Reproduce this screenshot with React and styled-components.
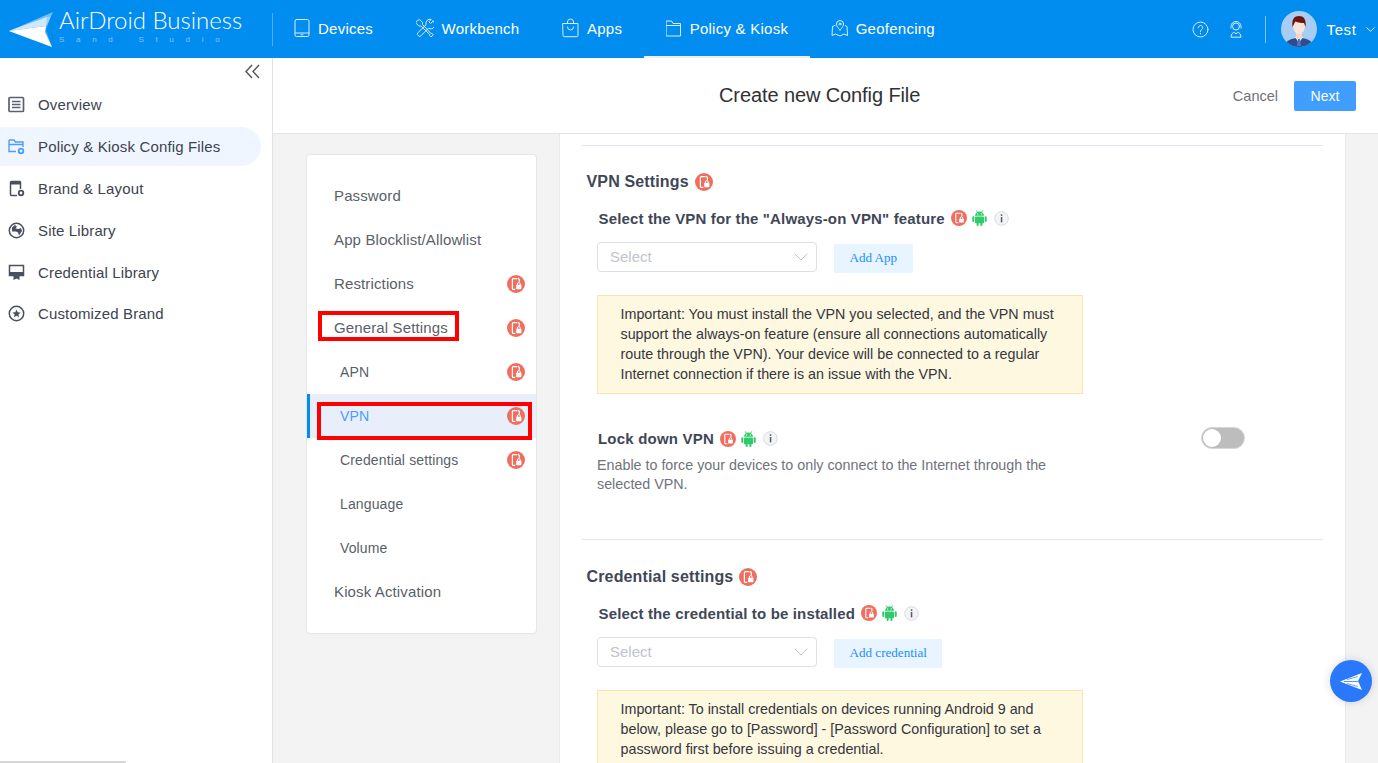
import React from "react";
import styled, { createGlobalStyle } from "styled-components";
import { ChevronDown } from "lucide-react";

const Global = createGlobalStyle`
  html, body { margin: 0; padding: 0; height: 100%; overflow: hidden; }
  body { font-family: "Liberation Sans", Arial, sans-serif; background: #f3f3f3; }
  * { box-sizing: border-box; }
`;

const Page = styled.div`
  position: relative;
  width: 1378px;
  height: 763px;
  overflow: hidden;
  display: flex;
  flex-direction: column;
`;

/* ---------- top bar ---------- */
const TopBar = styled.header`
  height: 58px;
  flex: none;
  background: #018cf0;
  display: flex;
  align-items: center;
  color: #fff;
`;
const Logo = styled.div`
  width: 273px;
  height: 33px;
  flex: none;
  display: flex;
  align-items: center;
  padding-left: 8px;
  gap: 5px;
  border-right: 1px solid rgba(255, 255, 255, 0.3);
`;
const LogoWords = styled.div`
  display: flex;
  flex-direction: column;
  width: 186px;
  align-self: flex-start;
  margin-top: -3.5px;
`;
const LogoName = styled.span`
  font-family: "Lato", sans-serif;
  font-weight: 300;
  font-size: 24px;
  line-height: 22px;
  white-space: nowrap;
`;
const LogoSub = styled.span`
  margin-top: 3.5px;
  font-size: 8px;
  line-height: 9px;
  letter-spacing: 11.7px;
  color: rgba(255, 255, 255, 0.5);
  white-space: nowrap;
`;
const Nav = styled.nav`
  display: flex;
  height: 100%;
`;
const NavItem = styled.div`
  height: 100%;
  padding: 0 21.5px 0 21px;
  display: flex;
  align-items: center;
  gap: 8px;
  font-size: 15px;
  letter-spacing: 0.25px;
  color: #fff;
  border-bottom: 2px solid ${(p) => (p.$active ? "#f0f0f0" : "transparent")};
`;
const TopRight = styled.div`
  margin-left: auto;
  display: flex;
  align-items: center;
  height: 100%;
`;
const TopIcon = styled.span`
  display: flex;
  width: 20px;
  justify-content: center;
  margin-right: 15px;
`;
const TopSep = styled.span`
  width: 1px;
  height: 27px;
  background: rgba(255, 255, 255, 0.5);
  margin: 0 15px 0 4px;
`;
const UserName = styled.span`
  font-size: 15px;
  letter-spacing: 0.6px;
  margin-left: 10px;
`;
const UserChevron = styled(ChevronDown)`
  margin: 0 0.5px 0 6px;
`;

/* ---------- body ---------- */
const Body = styled.div`
  flex: 1;
  min-height: 0;
  display: flex;
`;
const Sidebar = styled.aside`
  width: 273px;
  flex: none;
  background: #fff;
  border-right: 1px solid #e2e2e2;
  padding-top: 26px;
  display: flex;
  flex-direction: column;
`;
const Collapse = styled.div`
  height: 0;
  display: flex;
  justify-content: flex-end;
  padding-right: 12px;
  margin-top: -20px;
  margin-bottom: 20px;
`;
const SideList = styled.div`
  display: flex;
  flex-direction: column;
`;
const SideRow = styled.div`
  width: 261px;
  height: 39px;
  margin: 1.4px 0;
  display: flex;
  align-items: center;
  gap: 13px;
  padding-left: 8px;
  font-size: 15px;
  letter-spacing: 0.15px;
  color: #3d4350;
  background: ${(p) => (p.$active ? "#f0f6ff" : "transparent")};
  border-radius: 0 20px 20px 0;
`;
const Main = styled.main`
  flex: 1;
  min-width: 0;
  display: flex;
  flex-direction: column;
`;
const TitleBar = styled.div`
  position: relative;
  height: 76px;
  flex: none;
  background: #fff;
  border-bottom: 1px solid #e6e6e6;
  display: flex;
  align-items: center;
  justify-content: flex-end;
  padding-right: 22px;
`;
const Title = styled.h1`
  position: absolute;
  left: 446px;
  top: 24px;
  margin: 0;
  font-size: 20px;
  letter-spacing: -0.1px;
  line-height: 26px;
  font-weight: 400;
  color: #303133;
`;
const CancelBtn = styled.span`
  font-size: 14.5px;
  color: #6f7278;
  margin-right: 16px;
`;
const NextBtn = styled.span`
  width: 62px;
  height: 30px;
  background: #409eff;
  color: #fff;
  font-size: 14px;
  border-radius: 2px;
  display: flex;
  align-items: center;
  justify-content: center;
`;
const Content = styled.div`
  flex: 1;
  min-height: 0;
  display: flex;
  overflow: hidden;
`;
const LeftPane = styled.div`
  width: 287px;
  flex: none;
  padding: 20px 0 0 33px;
  border-right: 1px solid #e9e9e9;
`;
const Steps = styled.div`
  position: relative;
  width: 231px;
  height: 480px;
  background: #fff;
  border: 1px solid #e6e6e6;
  border-radius: 4px;
  padding: 19px 0;
`;
const StepRow = styled.div`
  height: 44px;
  display: flex;
  align-items: center;
  justify-content: space-between;
  padding: 0 11px 1px ${(p) => (p.$sub ? "30px" : "24px")};
  font-size: ${(p) => (p.$sub ? "14px" : "15px")};
  letter-spacing: 0.13px;
  color: ${(p) => (p.$active ? "#4a9dff" : "#5a5f69")};
  background: ${(p) => (p.$active ? "#e8effb" : "transparent")};
  border-left: 3px solid ${(p) => (p.$active ? "#018cf0" : "transparent")};
`;
const Highlight = styled.div`
  position: absolute;
  left: ${(p) => p.$left}px;
  top: ${(p) => p.$top}px;
  width: ${(p) => p.$w}px;
  height: ${(p) => p.$h}px;
  border: 4px solid #ff0000;
  pointer-events: none;
`;
const Panel = styled.section`
  width: 786px;
  flex: none;
  background: #fff;
  padding: 11px 22px 0 22px;
  border-right: 1px solid #e9e9e9;
`;
const SectionBlock = styled.div`
  border-top: 1px solid #e4e5ee;
  height: ${(p) => p.$h}px;
`;
const SectionHead = styled.h2`
  margin: ${(p) => p.$top}px 0 0 4.5px;
  height: 21px;
  display: flex;
  align-items: center;
  gap: 6px;
  font-size: 16px;
  letter-spacing: 0.15px;
  font-weight: 700;
  color: #3f4757;
`;
const FieldLabel = styled.div`
  margin: 16px 0 0 16.5px;
  height: 20px;
  display: flex;
  align-items: center;
  gap: 6px;
  font-size: 15px;
  font-weight: 700;
  letter-spacing: 0.15px;
  color: #3f4757;
`;
const PickRow = styled.div`
  margin: 14px 0 0 15px;
  display: flex;
  align-items: flex-start;
  gap: 17px;
`;
const PickBox = styled.div`
  width: 220px;
  height: 30px;
  border: 1px solid #dcdfe6;
  border-radius: 4px;
  padding: 0 12px 1px;
  display: flex;
  align-items: center;
  justify-content: space-between;
  font-size: 15px;
  color: #c0c4cc;
  background: #fff;
`;
const PickChevron = styled(ChevronDown)`
  margin-right: -9px;
  color: #c0c4cc;
`;
const AddBtn = styled.span`
  height: 29px;
  margin-top: 2px;
  padding: 0 15.5px 1px;
  display: flex;
  align-items: center;
  background: #e8f4ff;
  border-radius: 2px;
  color: #1890ff;
  font-family: "Liberation Serif", serif;
  font-size: 13.1px;
`;
const Notice = styled.div`
  width: 486px;
  margin: 22px 0 0 15px;
  padding: 8px 20px 9px 22.5px;
  background: #fef8e1;
  border: 1px solid #f5e6b8;
  font-size: 14.3px;
  line-height: 20px;
  color: #33363d;
`;
const LockRow = styled.div`
  margin: 34px 78px 0 16px;
  display: flex;
  justify-content: space-between;
  align-items: flex-start;
`;
const LockLabel = styled.div`
  display: flex;
  align-items: center;
  gap: 6px;
  height: 22px;
  padding-bottom: 1px;
  font-size: 15px;
  font-weight: 700;
  letter-spacing: 0.2px;
  color: #3f4757;
`;
const Toggle = styled.span`
  position: relative;
  display: block;
  width: 44px;
  height: 22px;
  margin-top: -1px;
  border-radius: 11px;
  background: #bdbdbd;
  border: 1px solid #d5d6dc;
`;
const Knob = styled.span`
  position: absolute;
  left: 1px;
  top: 1px;
  width: 18px;
  height: 18px;
  border-radius: 50%;
  background: #fff;
`;
const Hint = styled.p`
  width: 486px;
  margin: 6px 0 0 15px;
  font-size: 14.3px;
  line-height: 19px;
  color: #6f737c;
`;
const Fab = styled.div`
  position: absolute;
  left: 1330px;
  top: 660px;
  width: 42px;
  height: 42px;
  border-radius: 50%;
  background: #2a78fb;
  box-shadow: 0 0 10px rgba(0, 0, 0, 0.15);
  display: flex;
  align-items: center;
  justify-content: center;
`;
const ScrollThumb = styled.div`
  position: absolute;
  left: 0;
  bottom: 0;
  width: 126px;
  height: 2px;
  background: #d6d6d6;
`;
const IconSvg = styled.svg`
  flex: none;
  display: block;
`;
const IconRun = styled.span`
  display: flex;
  align-items: center;
  gap: 5px;
`;
const InfoGap = styled.span`
  display: flex;
  margin-left: 2px;
`;

/* ---------- drawings ---------- */
const Lock = ({ size = 18 }) => (
  <IconSvg width={size} height={size} viewBox="0 0 18 18">
    <circle cx="9" cy="9" r="9" fill="#ee6f5f" />
    <path d="M10.5 3.6H6.3a.9.9 0 0 0-.9.9v9a.9.9 0 0 0 .9.9h2" fill="none" stroke="#fff" strokeWidth="1.2" />
    <path d="M11 3.6h.4a.9.9 0 0 1 .9.9v2.4" fill="none" stroke="#fff" strokeWidth="1.2" />
    <path d="M10.4 10V9a1.4 1.4 0 0 1 2.8 0v1" fill="none" stroke="#fff" strokeWidth="1" />
    <rect x="9.2" y="9.8" width="5.2" height="4.4" rx=".6" fill="#fff" />
  </IconSvg>
);
const Info = () => (
  <IconSvg width="15" height="15" viewBox="0 0 15 15">
    <circle cx="7.5" cy="7.5" r="6.8" fill="#f3f4f6" stroke="#d9dbe1" />
    <rect x="6.8" y="3.3" width="1.5" height="1.6" fill="#555b66" />
    <rect x="6.8" y="6" width="1.5" height="5.4" fill="#555b66" />
  </IconSvg>
);
const Android = () => (
  <IconSvg width="15" height="16" viewBox="0 0 15 16" fill="#2fcb6a">
    <path d="M3 5.800a4.500 4.300 0 0 1 9 0z" />
    <path d="M4.200 .4l1.500 2.200M10.800 .4L9.300 2.600" stroke="#2fcb6a" strokeWidth=".9" />
    <circle cx="5.700" cy="3.900" r=".6" fill="#fff" />
    <circle cx="9.300" cy="3.900" r=".6" fill="#fff" />
    <rect x="3" y="6.400" width="9" height="6.800" rx=".8" />
    <rect x=".3" y="6.300" width="2" height="5.600" rx="1" />
    <rect x="12.700" y="6.300" width="2" height="5.600" rx="1" />
    <rect x="4.600" y="12" width="2" height="4" rx="1" />
    <rect x="8.400" y="12" width="2" height="4" rx="1" />
  </IconSvg>
);
const Platform = () => (
  <IconRun>
    <Lock size={16} />
    <Android />
    <InfoGap><Info /></InfoGap>
  </IconRun>
);

const Line = ({ children, w = 20, h = 20 }) => (
  <svg width={w} height={h} viewBox={`0 0 ${w} ${h}`} fill="none" stroke="#fff" strokeWidth="1" strokeLinejoin="round" strokeLinecap="round" style={{ flex: "none", opacity: 0.85 }}>
    {children}
  </svg>
);
const TabletIcon = () => (
  <Line w={16} h={20}>
    <rect x="1" y="1.500" width="14" height="17" rx="1.500" />
    <path d="M1 15h14M7 16.800h2" />
  </Line>
);
const ToolsIcon = () => (
  <Line w={18} h={20}>
    <path d="M1.500 2.500l2-1 3 3v2l8.500 9 .8-.3 1.500 1.600-2.200 2.200-1.500-1.600.3-.8-9-8.500h-2l-3-3z" />
    <path d="M17 3.200l-2.400 2.300-1.700-1.700 2.300-2.400a4 4 0 0 0-5 5.200L1.800 14.800l-.6 1.500 2 2.200 1.600-.7 7.700-7.600a4 4 0 0 0 4.500-7z" />
  </Line>
);
const BagIcon = () => (
  <Line w={17} h={20}>
    <path d="M1 5.500h15v12a1.200 1.200 0 0 1-1.200 1.200H2.200A1.200 1.200 0 0 1 1 17.500z" />
    <path d="M5.500 5.500V4a3 3 0 0 1 6 0v1.500M5.500 9a3 3 0 0 0 6 0" />
  </Line>
);
const FolderIcon = () => (
  <Line w={17} h={20}>
    <path d="M1.500 3h5l1.500 2.500h7.500v12.500h-14z" />
    <path d="M1.500 7.500h14" />
  </Line>
);
const GeoIcon = () => (
  <Line w={17} h={20}>
    <path d="M9 12s-3.500-3-3.500-6a3.500 3.500 0 0 1 7 0c0 3-3.500 6-3.500 6z" />
    <circle cx="9" cy="6" r="1" />
    <path d="M4 7.500L1.500 8.500l-.5 9 3.500-1.500 4.500 2 4-2 3.500 1.500-.5-9-1.500-.8" />
  </Line>
);
const HelpIcon = () => (
  <Line w={17} h={17}>
    <circle cx="8.500" cy="8.500" r="7.500" />
    <path d="M6.300 6.700a2.200 2.200 0 1 1 3.400 1.800c-.8.5-1.200 1-1.200 2" />
    <path d="M8.500 12.300v.6" />
  </Line>
);
const SupportIcon = () => (
  <Line w={16} h={18}>
    <circle cx="8" cy="6.500" r="3.500" />
    <path d="M3 8V6.500a5 5 0 0 1 10 0V8" />
    <path d="M3 16.800c0-3 2-4.300 3.500-4.500L8 14l1.500-1.700c1.500.2 3.500 1.500 3.500 4.500z" />
  </Line>
);
const Plane = () => (
  <svg width="46" height="38" viewBox="0 0 46 38" style={{ flex: "none" }}>
    <path d="M1 21L45 2 39 15z" fill="#fff" opacity=".45" />
    <path d="M1 21L43 6l-5 14 6 17z" fill="#fff" opacity=".3" />
    <path d="M1 21L38 16l-1 6 7 15z" fill="#fff" />
    <path d="M1 21l37-5 1-9z" fill="#cfe8fc" />
  </svg>
);
const Avatar = () => (
  <svg width="36" height="36" viewBox="0 0 36 36" style={{ flex: "none" }}>
    <defs>
      <clipPath id="av"><circle cx="18" cy="18" r="18" /></clipPath>
    </defs>
    <g clipPath="url(#av)">
      <rect width="36" height="36" fill="#a8cdf4" />
      <path d="M4 36c0-7 7-9 14-9s14 2 14 9z" fill="#2e4d8f" />
      <path d="M14 26h8l-4 6z" fill="#f4f6fa" />
      <path d="M17 28h2l1 7h-4z" fill="#4a78c5" />
      <rect x="15" y="21" width="6" height="7" fill="#f7d6c8" />
      <ellipse cx="18" cy="15" rx="6" ry="8" fill="#fbe3d8" />
      <path d="M11.500 16c-1-8 2-11 6.500-11s7.500 3 6.500 11l-1.500-4c-2 0-6 0-8.500-1.500-1 1-1.500 3-3 5.500z" fill="#6e1410" />
    </g>
  </svg>
);

const sideSvg = { width: 17, height: 17, viewBox: "0 0 17 17", style: { flex: "none" } };
const OverviewIcon = () => (
  <svg {...sideSvg}>
    <rect x="1" y="1.500" width="14.500" height="14" rx="1" fill="none" stroke="#5b6170" strokeWidth="1.700" />
    <path d="M4 5.500h8.500M4 8.500h8.500M4 11.500h8.500" stroke="#5b6170" strokeWidth="1.300" />
  </svg>
);
const PolicyIcon = () => (
  <svg {...sideSvg}>
    <path d="M1 2h5l1.500 2h7.500v5M1 2v11.500h7M1 6.500h14" fill="none" stroke="#4a9dff" strokeWidth="1.400" />
    <circle cx="13" cy="13" r="2.300" fill="none" stroke="#4a9dff" strokeWidth="1.800" />
  </svg>
);
const BrandIcon = () => (
  <svg {...sideSvg}>
    <path d="M9 15.500H3.500a1 1 0 0 1-1-1v-12a1 1 0 0 1 1-1h8a1 1 0 0 1 1 1V9" fill="none" stroke="#4a5060" strokeWidth="1.500" />
    <rect x="2.500" y="1.500" width="10" height="3" fill="#4a5060" />
    <circle cx="13" cy="13" r="2.300" fill="none" stroke="#4a5060" strokeWidth="1.800" />
  </svg>
);
const SiteIcon = () => (
  <svg {...sideSvg}>
    <circle cx="8.500" cy="8.500" r="7.200" fill="none" stroke="#4a5060" strokeWidth="1.500" />
    <path d="M4 5.500l3-2.500 2 1.500-1.500 2 3 .5L13 6l1 3-3 4.500-1-3-2-1-4 0z" fill="#4a5060" />
  </svg>
);
const CredIcon = () => (
  <svg {...sideSvg}>
    <path d="M1.500 1.500h14v10h-14z" fill="none" stroke="#4a5060" strokeWidth="1.500" />
    <path d="M1.500 8h14v3.500h-14zM5.500 11h6v5l-3-1.500-3 1.500z" fill="#4a5060" />
  </svg>
);
const StarIcon = () => (
  <svg {...sideSvg}>
    <circle cx="8.500" cy="8.500" r="7.200" fill="none" stroke="#4a5060" strokeWidth="1.500" />
    <path d="M8.500 4.500l1.200 2.700 2.900.3-2.200 1.900.7 2.900-2.600-1.500-2.600 1.500.7-2.900-2.200-1.900 2.900-.3z" fill="#4a5060" />
  </svg>
);
const DoubleLeft = () => (
  <svg width="15" height="15" viewBox="0 0 15 15" fill="none" stroke="#555" strokeWidth="1.400">
    <path d="M7 1L1 7.500 7 14M14 1L8 7.500 14 14" />
  </svg>
);
const FabPlane = () => (
  <svg width="23" height="17" viewBox="0 0 23 17">
    <path d="M0 8.500L22 0l-4 8 4 9z" fill="#fff" />
    <path d="M4 8.500h14" stroke="#2a78fb" strokeWidth=".8" />
    <path d="M7 6.500l11-3M7 10.500l11 3" stroke="#2a78fb" strokeWidth=".7" />
  </svg>
);

/* ---------- data ---------- */
const navItems = [
  { label: "Devices", icon: <TabletIcon /> },
  { label: "Workbench", icon: <ToolsIcon /> },
  { label: "Apps", icon: <BagIcon /> },
  { label: "Policy & Kiosk", icon: <FolderIcon />, active: true },
  { label: "Geofencing", icon: <GeoIcon /> },
];
const sideItems = [
  { label: "Overview", icon: <OverviewIcon /> },
  { label: "Policy & Kiosk Config Files", icon: <PolicyIcon />, active: true },
  { label: "Brand & Layout", icon: <BrandIcon /> },
  { label: "Site Library", icon: <SiteIcon /> },
  { label: "Credential Library", icon: <CredIcon /> },
  { label: "Customized Brand", icon: <StarIcon /> },
];
const stepItems = [
  { label: "Password" },
  { label: "App Blocklist/Allowlist" },
  { label: "Restrictions", lock: true },
  { label: "General Settings", lock: true },
  { label: "APN", lock: true, sub: true },
  { label: "VPN", lock: true, sub: true, active: true },
  { label: "Credential settings", lock: true, sub: true },
  { label: "Language", sub: true },
  { label: "Volume", sub: true },
  { label: "Kiosk Activation" },
];

export default function App() {
  return (
    <Page>
      <Global />
      <TopBar>
        <Logo>
          <Plane />
          <LogoWords>
            <LogoName>AirDroid Business</LogoName>
            <LogoSub>Sand Studio</LogoSub>
          </LogoWords>
        </Logo>
        <Nav>
          {navItems.map((n) => (
            <NavItem key={n.label} $active={n.active}>
              {n.icon}
              {n.label}
            </NavItem>
          ))}
        </Nav>
        <TopRight>
          <TopIcon><HelpIcon /></TopIcon>
          <TopIcon><SupportIcon /></TopIcon>
          <TopSep />
          <Avatar />
          <UserName>Test</UserName>
          <UserChevron size={15} strokeWidth={1.3} />
        </TopRight>
      </TopBar>
      <Body>
        <Sidebar>
          <Collapse><DoubleLeft /></Collapse>
          <SideList>
            {sideItems.map((s) => (
              <SideRow key={s.label} $active={s.active}>
                {s.icon}
                {s.label}
              </SideRow>
            ))}
          </SideList>
        </Sidebar>
        <Main>
          <TitleBar>
            <Title>Create new Config File</Title>
            <CancelBtn>Cancel</CancelBtn>
            <NextBtn>Next</NextBtn>
          </TitleBar>
          <Content>
            <LeftPane>
              <Steps>
                {stepItems.map((s) => (
                  <StepRow key={s.label} $sub={s.sub} $active={s.active}>
                    {s.label}
                    {s.lock && <Lock />}
                  </StepRow>
                ))}
                <Highlight $left={11} $top={156} $w={141} $h={30} />
                <Highlight $left={10} $top={247} $w={215} $h={38} />
              </Steps>
            </LeftPane>
            <Panel>
              <SectionBlock $h={394}>
                <SectionHead $top={25}>VPN Settings <Lock /></SectionHead>
                <FieldLabel>Select the VPN for the "Always-on VPN" feature <Platform /></FieldLabel>
                <PickRow>
                  <PickBox>Select<PickChevron size={24} strokeWidth={1} /></PickBox>
                  <AddBtn>Add App</AddBtn>
                </PickRow>
                <Notice>
                  Important: You must install the VPN you selected, and the VPN must support the always-on feature (ensure all connections automatically route through the VPN). Your device will be connected to a regular Internet connection if there is an issue with the VPN.
                </Notice>
                <LockRow>
                  <LockLabel>Lock down VPN <Platform /></LockLabel>
                  <Toggle><Knob /></Toggle>
                </LockRow>
                <Hint>Enable to force your devices to only connect to the Internet through the selected VPN.</Hint>
              </SectionBlock>
              <SectionBlock $h={395}>
                <SectionHead $top={26}>Credential settings <Lock /></SectionHead>
                <FieldLabel>Select the credential to be installed <Platform /></FieldLabel>
                <PickRow>
                  <PickBox>Select<PickChevron size={24} strokeWidth={1} /></PickBox>
                  <AddBtn>Add credential</AddBtn>
                </PickRow>
                <Notice>
                  Important: To install credentials on devices running Android 9 and below, please go to [Password] - [Password Configuration] to set a password first before issuing a credential.
                </Notice>
              </SectionBlock>
            </Panel>
          </Content>
        </Main>
      </Body>
      <Fab><FabPlane /></Fab>
      <ScrollThumb />
    </Page>
  );
}
